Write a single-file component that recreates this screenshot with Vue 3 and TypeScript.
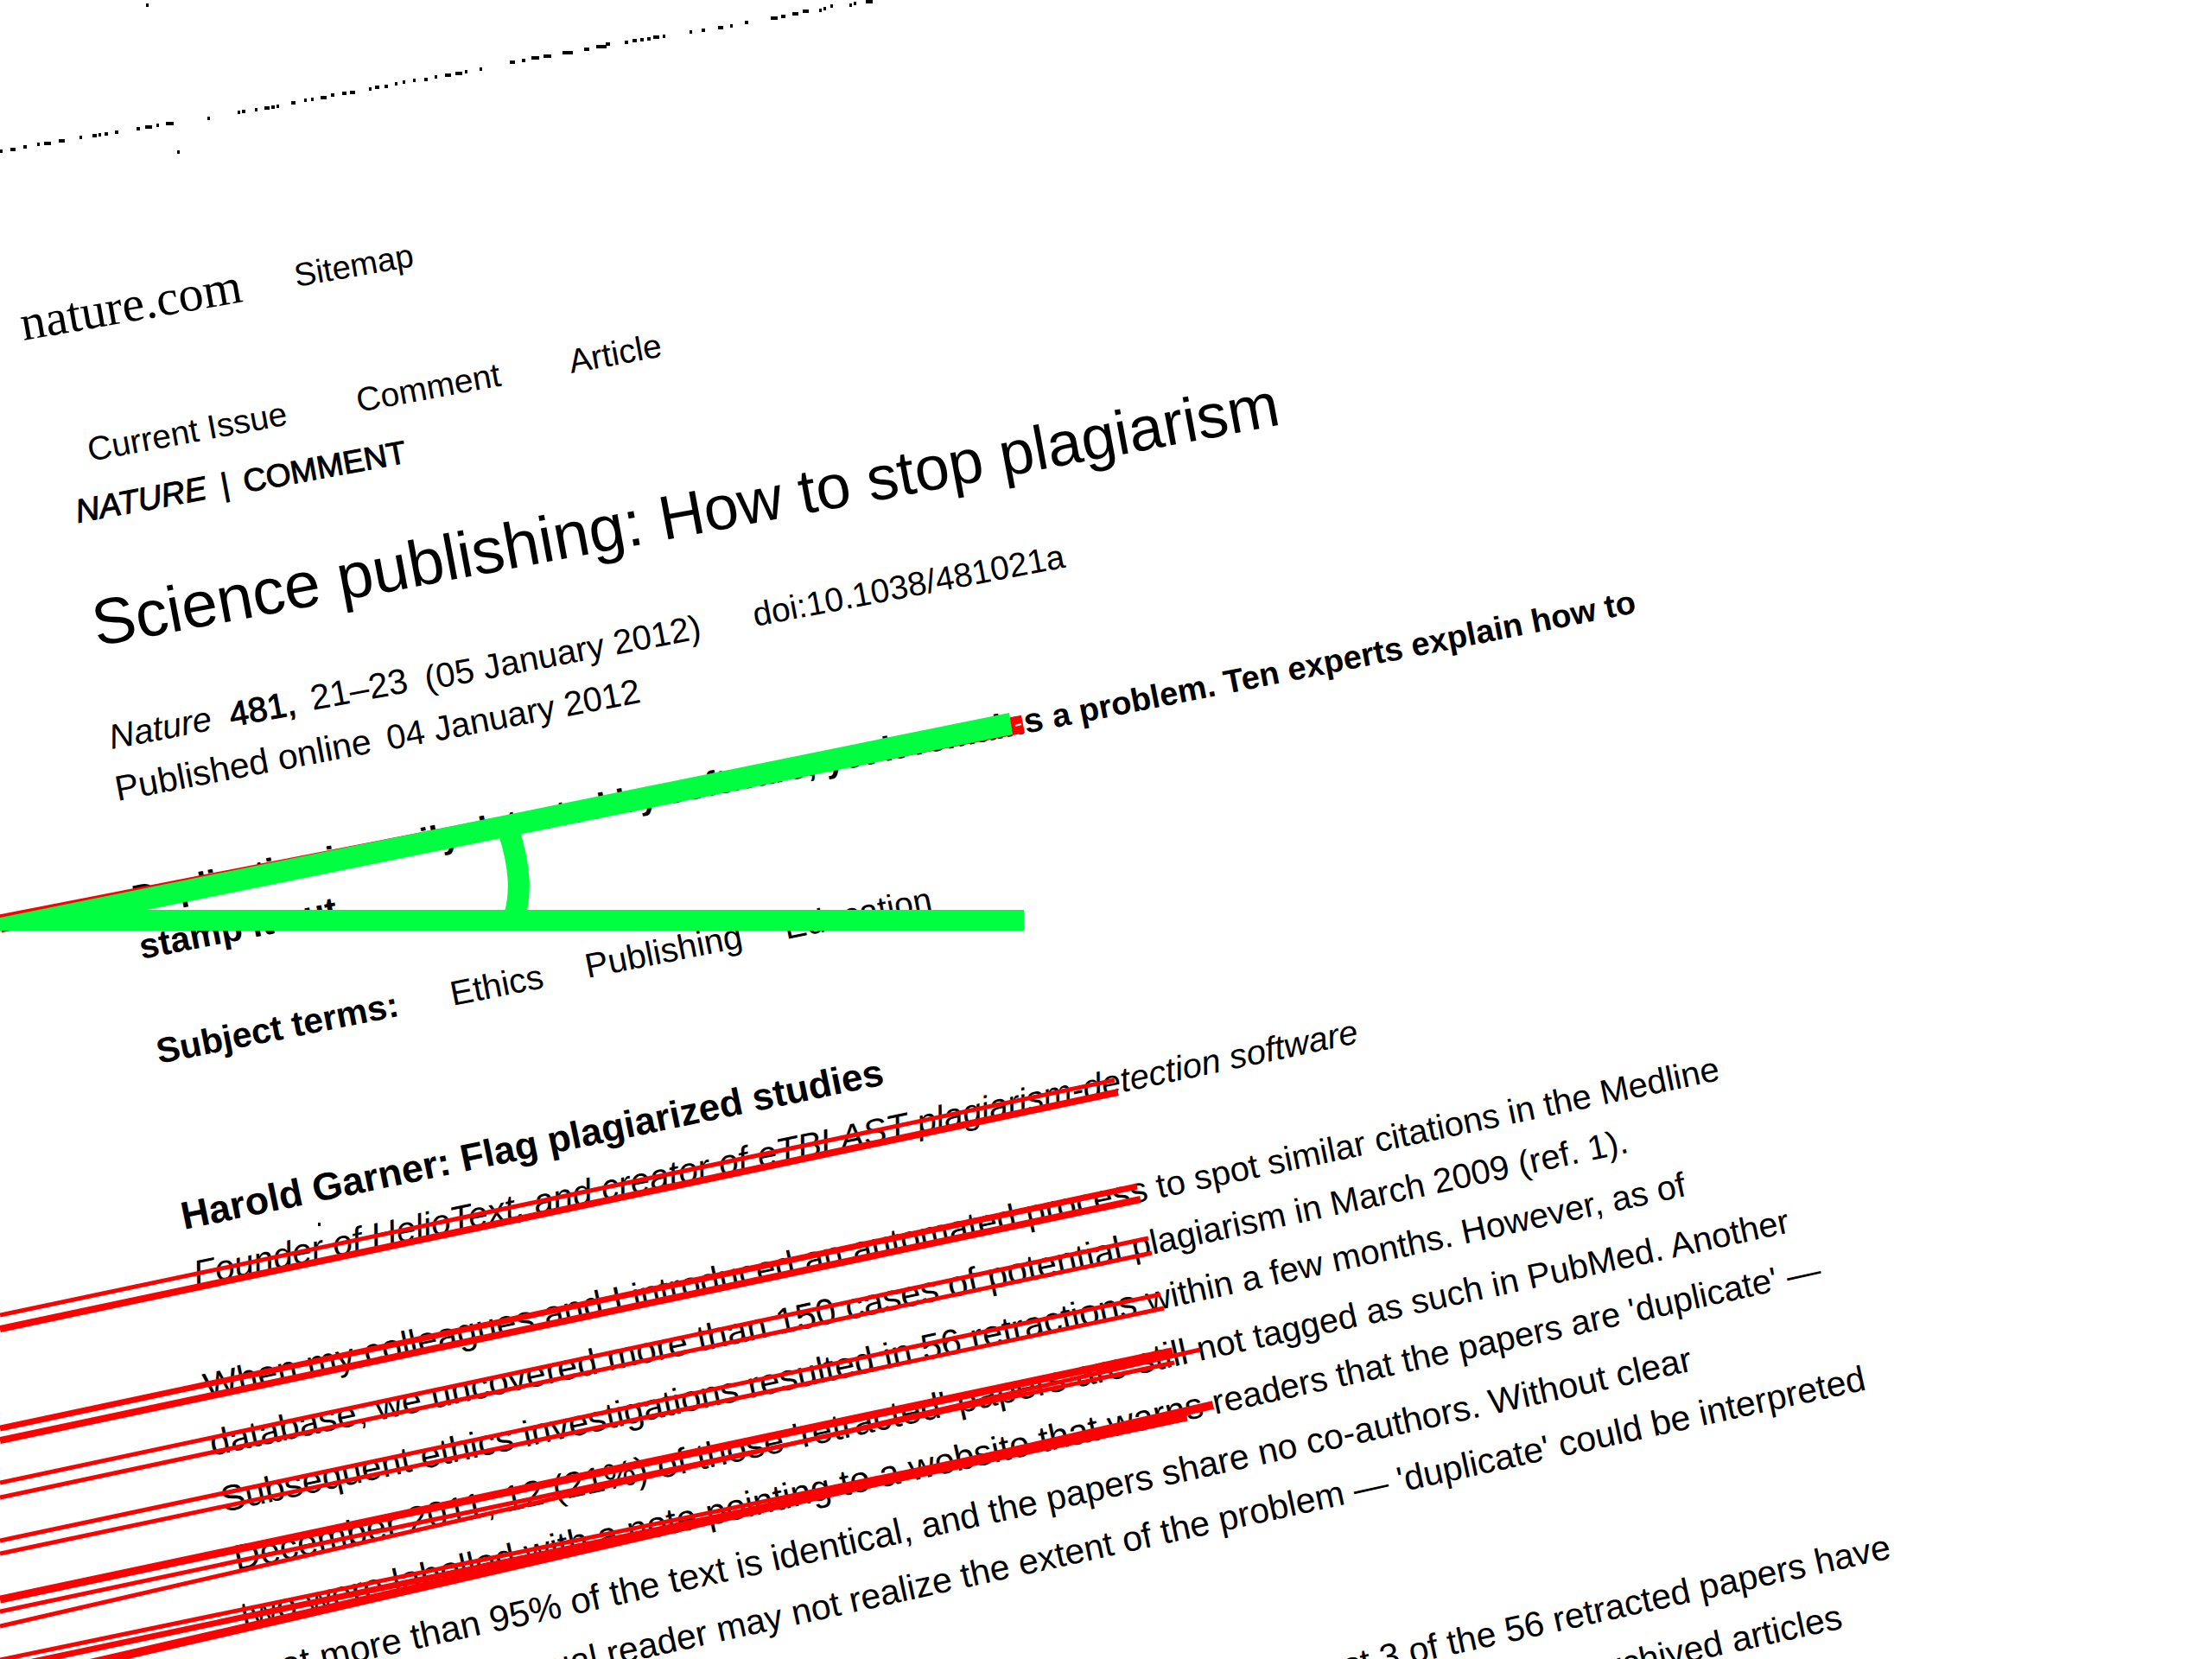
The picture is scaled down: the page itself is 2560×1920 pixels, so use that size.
<script setup lang="ts">
interface Part {
  text: string
  size: number
}

interface Run {
  parts: Part[]
  x: number
  y: number
  angle: number
  kind?: string
  href?: string
}

interface Stroke {
  x1: number
  y1: number
  x2: number
  y2: number
  width: number
}

const one = (text: string, size: number): Part[] => [{ text, size }]

/* The page was photographed at a slant, so long lines shrink toward the right. */
const two = (left: string, leftSize: number, right: string, rightSize: number): Part[] => [
  { text: left, size: leftSize },
  { text: right, size: rightSize },
]

const links: Run[] = [
  { parts: one('nature.com', 58), x: 27, y: 394, angle: 10, kind: 'serif', href: '#home' },
  { parts: one('Sitemap', 38), x: 343, y: 332, angle: 10, href: '#sitemap' },
  { parts: one('Current Issue', 39), x: 104, y: 534, angle: 10.5, href: '#issue' },
  { parts: one('Comment', 39), x: 415, y: 477, angle: 10.5, href: '#comment' },
  { parts: one('Article', 39), x: 661, y: 432, angle: 10.5, href: '#article' },
  { parts: one('Ethics', 40), x: 524, y: 1164, angle: 11.2, href: '#ethics' },
  { parts: one('Publishing', 40), x: 680, y: 1132, angle: 11.2, href: '#publishing' },
  { parts: one('Education', 39), x: 910, y: 1087, angle: 11.2, href: '#education' },
]

const runs: Run[] = [
  { parts: one('NATURE', 38), x: 90, y: 605, angle: 10.5, kind: 'semi italic' },
  { parts: one('|', 37), x: 258, y: 574, angle: 10.5, kind: 'semi' },
  { parts: one('COMMENT', 37), x: 284, y: 570, angle: 10.5, kind: 'semi' },
  { parts: two('Science publishing: ', 75, 'How to stop plagiarism', 72), x: 112, y: 748, angle: 10.6 },
  { parts: one('Nature', 40), x: 129, y: 867, angle: 10.7, kind: 'italic' },
  { parts: one('481,', 40), x: 268, y: 841, angle: 10.7, kind: 'semi' },
  { parts: one('21–23', 41), x: 362, y: 822, angle: 10.7 },
  { parts: one('(05 January 2012)', 40), x: 494, y: 799, angle: 10.7 },
  { parts: one('doi:10.1038/481021a', 39), x: 874, y: 725, angle: 10.8 },
  { parts: one('Published online', 41), x: 136, y: 927, angle: 10.7 },
  { parts: one('04 January 2012', 40), x: 450, y: 868, angle: 10.7 },
  { parts: two('Duplication is easily detected by software, yet it remains ', 40, 'a problem. Ten experts explain how to', 38), x: 156, y: 1053, angle: 11.2, kind: 'bold' },
  { parts: one('stamp it out.', 41), x: 164, y: 1110, angle: 11, kind: 'bold' },
  { parts: one('Subject terms:', 41), x: 184, y: 1231, angle: 11.2, kind: 'bold' },
  { parts: two('Harold Garner: ', 45, 'Flag plagiarized studies', 44), x: 213, y: 1423, angle: 11.7, kind: 'bold' },
  { parts: two('Founder of HelioText, and creator of eTBLAST ', 41, 'plagiarism-detection software', 40), x: 227, y: 1488, angle: 11.8, kind: 'italic' },
  { parts: [{ text: 'When my colleagues and I ', size: 42 }, { text: 'introduced an automated process ', size: 41 }, { text: 'to spot similar citations in the Medline', size: 40 }], x: 239, y: 1619, angle: 11.9 },
  { parts: two('database, we uncovered more than 150 cases of potential ', 42, 'plagiarism in March 2009 (ref. 1).', 40), x: 246, y: 1685, angle: 12.1 },
  { parts: two('Subsequent ethics investigations resulted in 56 retractions ', 42, 'within a few months. However, as of', 40), x: 259, y: 1750, angle: 12.2 },
  { parts: two("December 2011, 12 (21%) of those 'retracted' papers are still ", 42, 'not tagged as such in PubMed. Another', 40), x: 274, y: 1818, angle: 12.3 },
  { parts: two('two were labelled with a note pointing to a website that warns ', 42, "readers that the papers are 'duplicate' —", 40), x: 282, y: 1884, angle: 12.4 },
]

/* Lines that run out of the lower edge are anchored on their last letter. */
const tailRuns: Run[] = [
  { parts: two('yet more than 95% of the text is identical, ', 42, 'and the papers share no co-authors. Without clear', 41), x: 1960, y: 1586, angle: 12.3 },
  { parts: one("explanation, a casual reader may not realize the extent of the problem — 'duplicate' could be interpreted", 41), x: 2161, y: 1608, angle: 12.4 },
  { parts: one('At least 3 of the 56 retracted papers have', 41), x: 2190, y: 1803, angle: 12.4 },
  { parts: one('archived articles', 41), x: 2134, y: 1884, angle: 12.4 },
]

const strokes: Stroke[] = [
  { x1: 0, y1: 1522, x2: 1290, y2: 1250, width: 5 },
  { x1: 0, y1: 1538, x2: 1294, y2: 1264, width: 8 },
  { x1: 0, y1: 1653, x2: 1316, y2: 1373, width: 7 },
  { x1: 0, y1: 1667, x2: 1320, y2: 1388, width: 8 },
  { x1: 0, y1: 1716, x2: 1329, y2: 1433, width: 5 },
  { x1: 0, y1: 1733, x2: 1333, y2: 1450, width: 5 },
  { x1: 0, y1: 1783, x2: 1343, y2: 1498, width: 5 },
  { x1: 0, y1: 1798, x2: 1347, y2: 1514, width: 5 },
  { x1: 0, y1: 1851, x2: 1357, y2: 1564, width: 9 },
  { x1: 0, y1: 1865, x2: 1359, y2: 1577, width: 5 },
  { x1: 0, y1: 1882, x2: 1389, y2: 1562, width: 5 },
  { x1: 0, y1: 1921, x2: 1374, y2: 1636, width: 5 },
  { x1: 0, y1: 1931, x2: 1374, y2: 1641, width: 7 },
  { x1: 0, y1: 1949, x2: 1404, y2: 1626, width: 10 },
]

/* Specks left of the page's upper rule: x, y, width */
const specks: [number, number, number][] = [
  [0, 173, 3], [12, 171, 6], [27, 168, 4], [43, 165, 3], [51, 164, 8], [68, 161, 7], [92, 157, 3],
  [107, 155, 5], [114, 154, 3], [121, 153, 4], [133, 151, 4], [158, 147, 4], [168, 145, 8], [181, 143, 3],
  [192, 141, 9], [240, 135, 3], [275, 128, 3], [280, 127, 4], [295, 125, 3], [306, 123, 6], [314, 122, 4],
  [320, 121, 3], [337, 117, 5], [352, 114, 3], [360, 113, 3], [371, 111, 7], [383, 108, 4], [396, 106, 5],
  [405, 105, 6], [427, 101, 3], [434, 99, 5], [445, 98, 4], [457, 95, 3], [466, 93, 3], [478, 91, 3],
  [491, 90, 4], [503, 87, 3], [515, 85, 7], [527, 83, 8], [538, 81, 3], [555, 78, 3], [590, 70, 6],
  [604, 68, 4], [615, 65, 9], [629, 63, 9], [651, 59, 12], [676, 55, 6], [690, 52, 12], [701, 49, 5],
  [723, 47, 4], [732, 45, 5], [741, 44, 4], [749, 43, 4], [756, 41, 7], [767, 40, 3], [798, 35, 3],
  [812, 33, 4], [831, 30, 6], [845, 28, 3], [862, 24, 4], [892, 19, 8], [904, 17, 5], [917, 14, 7],
  [929, 11, 7], [948, 10, 3], [953, 8, 3], [961, 5, 3], [983, 4, 3], [988, 2, 3], [1002, 0, 8],
  [169, 4, 3], [205, 174, 3], [368, 1415, 3],
]

const place = (run: Run): string => `rotate(${-run.angle} ${run.x} ${run.y})`
</script>

<template>
  <main class="scan">
    <svg class="sheet" viewBox="0 0 2560 1920" role="img" aria-label="Skew angle of a scanned article">
      <rect v-for="(s, i) in specks" :key="'k' + i" :x="s[0]" :y="s[1]" :width="s[2]" height="4" />

      <a v-for="run in links" :key="run.href" :href="run.href">
        <text :class="run.kind" :x="run.x" :y="run.y" :transform="place(run)"><tspan v-for="part in run.parts" :key="part.text" :font-size="part.size">{{ part.text }}</tspan></text>
      </a>
      <text v-for="run in runs" :key="run.y + '-' + run.x" :class="run.kind" :x="run.x" :y="run.y" :transform="place(run)"><tspan v-for="part in run.parts" :key="part.text" :font-size="part.size">{{ part.text }}</tspan></text>
      <text v-for="run in tailRuns" :key="run.y" class="tail" :x="run.x" :y="run.y" :transform="place(run)"><tspan v-for="part in run.parts" :key="part.text" :font-size="part.size">{{ part.text }}</tspan></text>

      <g class="detected">
        <line v-for="(s, i) in strokes" :key="'s' + i" :x1="s.x1" :y1="s.y1" :x2="s.x2" :y2="s.y2" :stroke-width="s.width" />
        <line x1="0" y1="1069" x2="1184" y2="838" stroke-width="21" />
      </g>
      <path class="nick" d="M1175 840L1182 838" />

      <g class="angle">
        <path class="arc" d="M588 960C600 995 605 1030 595 1062" />
        <path d="M0 1062L1168 825L1172 850L170 1053H1185V1077H0Z" />
      </g>
    </svg>
  </main>
</template>

<style>
body {
  background: #fff;
}
</style>

<style scoped>
.scan {
  overflow: hidden;
  background: #fff;
}

.sheet {
  display: block;
  width: 100%;
  height: auto;
  font-family: "Liberation Sans", Arial, sans-serif;
  fill: #000;
}

.sheet text {
  text-rendering: geometricPrecision;
  white-space: pre;
  stroke: #000;
  stroke-width: 0;
}

.sheet a {
  text-decoration: none;
}

.sheet .serif {
  font-family: "Liberation Serif", "Times New Roman", serif;
}

.italic {
  font-style: italic;
}

.bold {
  font-weight: 700;
}

.sheet .semi {
  stroke-width: 1;
}

.tail {
  text-anchor: end;
}

.detected {
  stroke: #f00;
}

.nick {
  stroke: #fff;
  stroke-width: 2;
}

.angle {
  fill: #00ff40;
}

.arc {
  fill: none;
  stroke: #00ff40;
  stroke-width: 25;
}
</style>
